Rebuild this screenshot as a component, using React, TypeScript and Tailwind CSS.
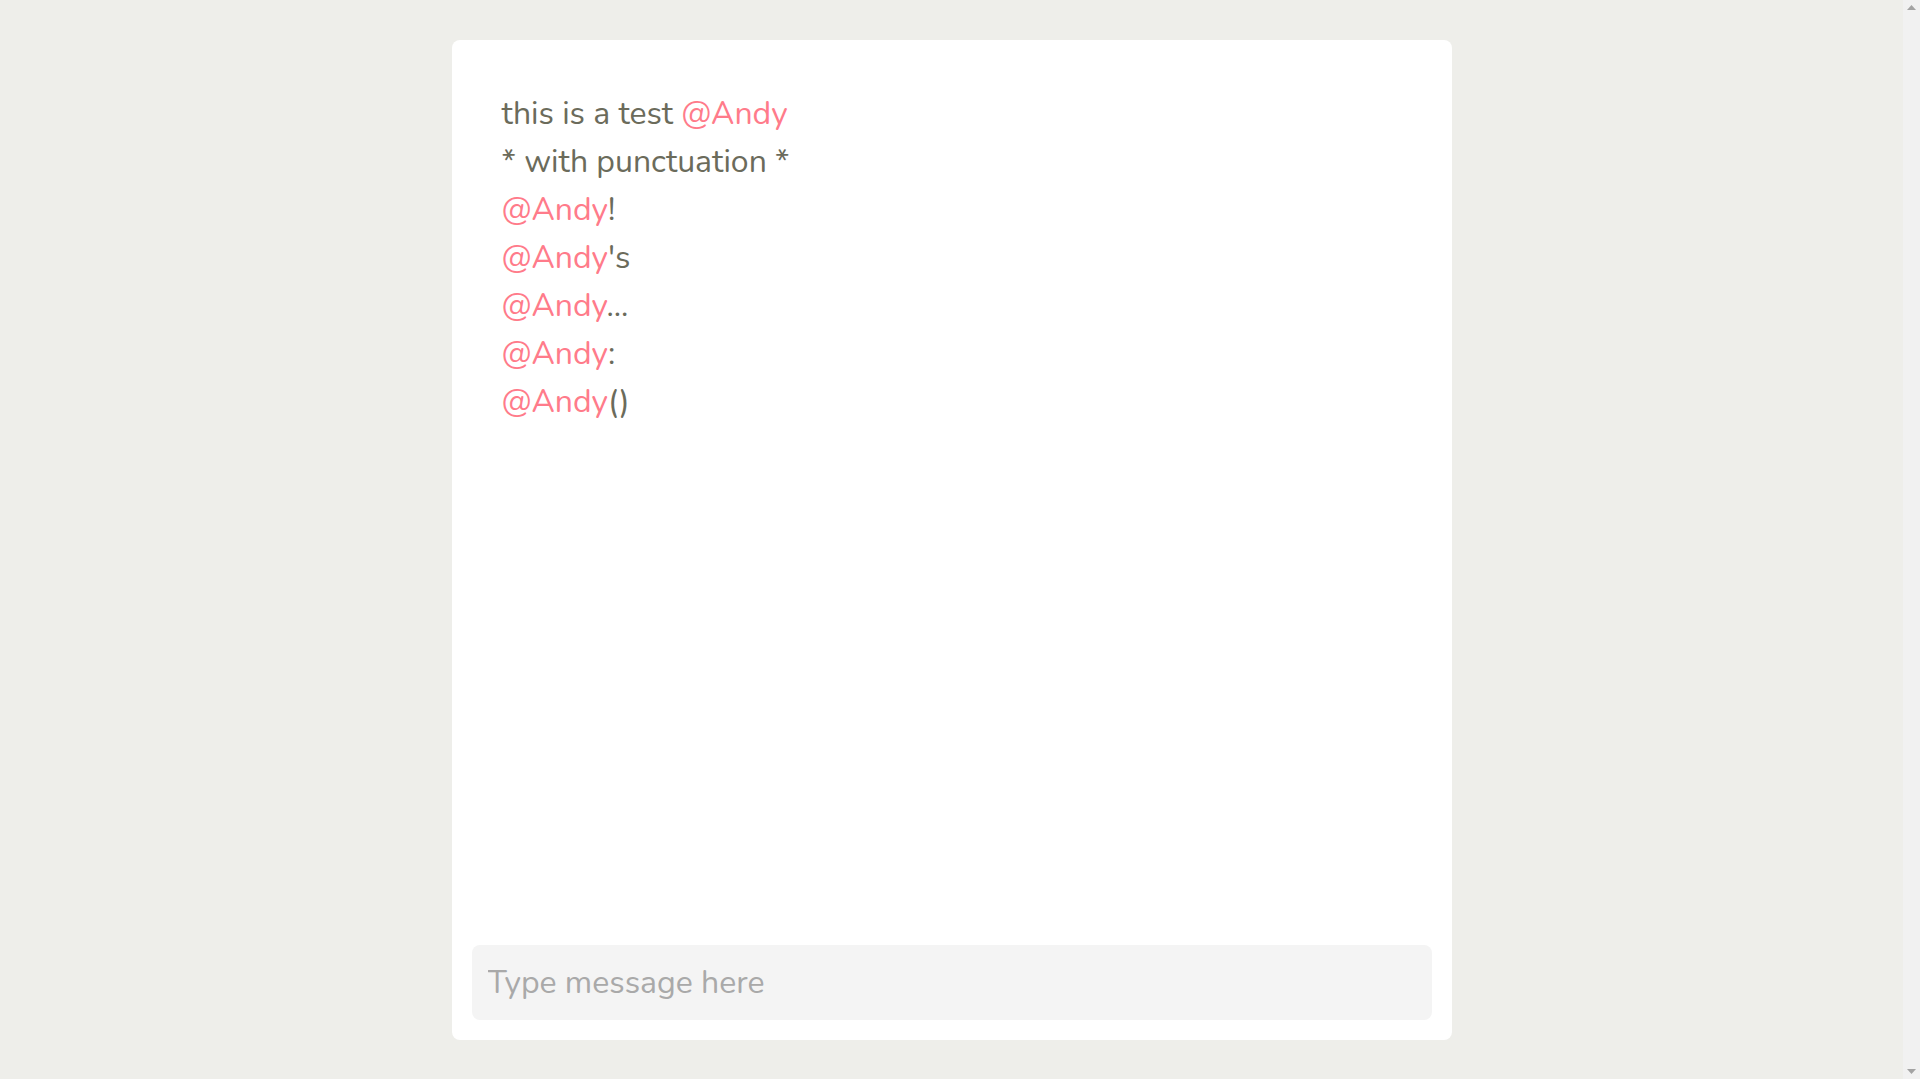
import { useState } from 'react'

type Part = { text: string; mention?: boolean }

const messages: Part[][] = [
  [{ text: 'this is a test ' }, { text: '@Andy', mention: true }],
  [{ text: '* with punctuation *' }],
  [{ text: '@Andy', mention: true }, { text: '!' }],
  [{ text: '@Andy', mention: true }, { text: "'s" }],
  [{ text: '@Andy', mention: true }, { text: '...' }],
  [{ text: '@Andy', mention: true }, { text: ':' }],
  [{ text: '@Andy', mention: true }, { text: '()' }],
]

function App() {
  const [draft, setDraft] = useState('')

  return (
    <div className="flex h-screen overflow-hidden bg-[#eeeeea]">
      <main
        className="flex-1 py-10"
        style={{ fontFamily: "'Nunito', 'Lato', 'Open Sans', sans-serif" }}
      >
        <div className="mx-auto flex h-[1000px] w-[1000px] flex-col rounded-lg bg-white p-5">
          <section className="flex-1 p-[30px] text-[32px] leading-[48px] text-[#6b6b5b]">
            {messages.map((parts, i) => (
              <p key={i}>
                {parts.map((part, j) => (
                  <span key={j} className={part.mention ? 'text-[#ff7b8a]' : ''}>
                    {part.text}
                  </span>
                ))}
              </p>
            ))}
          </section>

          <input
            type="text"
            value={draft}
            onChange={(event) => {
              setDraft(event.target.value)
            }}
            placeholder="Type message here"
            className="h-[75px] w-full rounded-lg bg-[#f4f4f4] px-4 text-[32px] text-[#6b6b5b] outline-none placeholder:text-[#a9a9a9]"
          />
        </div>
      </main>

      {/* page scrollbar */}
      <aside className="flex w-[17px] flex-col items-center justify-between bg-[#f1f1f1] py-[5px]">
        <svg width="9" height="5" viewBox="0 0 9 5">
          <path d="M4.5 0 L9 5 L0 5 Z" fill="#a3a3a3" />
        </svg>
        <svg width="9" height="5" viewBox="0 0 9 5">
          <path d="M0 0 L9 0 L4.5 5 Z" fill="#a3a3a3" />
        </svg>
      </aside>
    </div>
  )
}

export default App
